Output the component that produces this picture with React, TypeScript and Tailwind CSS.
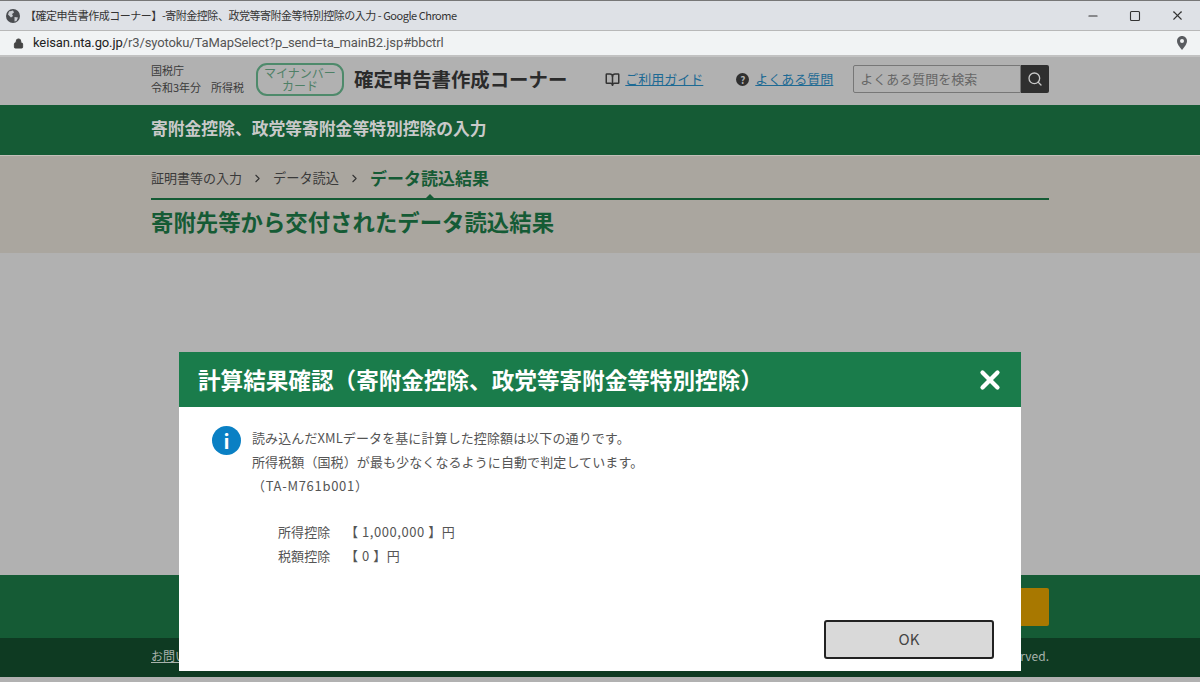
import { Search, X, Minus, Square, Lock, BookOpen, ChevronRight } from "lucide-react";

const font = "[font-family:'Noto_Sans_CJK_JP','Noto_Sans',sans-serif]";

export default function App() {
  return (
    <div className={`relative flex h-[682px] w-[1200px] flex-col overflow-hidden bg-[#b1b1b1] ${font}`}>
      {/* Browser title bar */}
      <div className="flex h-[30px] shrink-0 items-center border-t border-[#777] bg-[#dee1e6] pl-[6px]">
        <svg width="14" height="14" viewBox="0 0 14 14" className="shrink-0">
          <circle cx="7" cy="7" r="7" fill="#4a4c50" />
          <path d="M3 2.5 L7 1.5 L8 3.5 L6 5 L7 7 L5 8.5 L2 5.5 Z" fill="#c9ccd1" />
          <path d="M8.5 8 L12 8.5 L10.5 12 L8.5 12.5 Z" fill="#c9ccd1" />
        </svg>
        <span className="ml-[5px] whitespace-nowrap text-[11px] tracking-[-0.47px] text-[#333]">
          【確定申告書作成コーナー】-寄附金控除、政党等寄附金等特別控除の入力 - Google Chrome
        </span>
        <div className="ml-auto flex items-center gap-[29px] pr-[15px] text-[#333]">
          <Minus size={14} strokeWidth={1.9} />
          <Square size={12} strokeWidth={2.2} />
          <X size={15} strokeWidth={1.7} />
        </div>
      </div>
      {/* URL bar */}
      <div className="flex h-[25px] shrink-0 items-center border-t border-[#b8b8b8] bg-[#f1f3f4] pl-[13px] pr-[13px]">
        <Lock size={11} fill="#444" className="text-[#444]" />
        <span className="ml-[9px] whitespace-nowrap text-[13px] tracking-[-0.11px] text-[#555] [font-family:Roboto,sans-serif]">
          <span className="text-[#222]">keisan.nta.go.jp</span>/r3/syotoku/TaMapSelect?p_send=ta_mainB2.jsp#bbctrl
        </span>
        <svg width="10" height="14" viewBox="0 0 10 14" className="ml-auto shrink-0">
          <path d="M5 0 C2.2 0 0 2.2 0 5 C0 8.5 5 14 5 14 C5 14 10 8.5 10 5 C10 2.2 7.8 0 5 0 Z" fill="#5a5c60" />
          <circle cx="5" cy="5" r="2" fill="#f1f3f4" />
        </svg>
      </div>
      {/* Header */}
      <div className="flex h-[50px] shrink-0 items-center border-t-2 border-[#c2c2c2] bg-[#b1b1b1] pb-[4px] pl-[151px] pr-[151px]">
        <div className="w-[105px] shrink-0 text-[11px] leading-[17px] text-[#3a3a3a]">
          <div>国税庁</div>
          <div className="whitespace-nowrap">令和3年分&nbsp;&nbsp;&nbsp;&nbsp;所得税</div>
        </div>
        <div className="flex h-[33px] w-[88px] shrink-0 flex-col items-center justify-center rounded-[11px] border-2 border-[#4e8a6b] text-[12px] leading-[13px] text-[#4e8066]">
          <div>マイナンバー</div>
          <div>カード</div>
        </div>
        <div className="ml-[10px] whitespace-nowrap text-[19.4px] font-bold text-[#2b2b2b]">確定申告書作成コーナー</div>
        <BookOpen size={15} strokeWidth={2.4} className="ml-[38px] shrink-0 text-[#333]" />
        <a className="ml-[5px] whitespace-nowrap text-[13px] text-[#1d6a94] underline">ご利用ガイド</a>
        <span className="ml-[33px] flex h-[13px] w-[13px] shrink-0 items-center justify-center rounded-full bg-[#2f2f2f] text-[10px] font-bold text-[#b1b1b1]">?</span>
        <a className="ml-[6px] whitespace-nowrap text-[13px] text-[#1d6a94] underline">よくある質問</a>
        <div className="ml-[20px] flex h-[28px] w-[168px] shrink-0 items-center rounded-l-[2px] border border-[#777] pl-[6px] text-[13px] text-[#666]">よくある質問を検索</div>
        <div className="flex h-[28px] w-[28px] shrink-0 items-center justify-center rounded-r-[2px] bg-[#2f2f2f]">
          <Search size={16} className="text-[#c8c8c8]" strokeWidth={2} />
        </div>
      </div>
      {/* Green title band */}
      <div className="flex h-[50px] shrink-0 items-center bg-[#155b35] pb-[2px] pl-[151px] text-[16.8px] font-bold text-[#c9c9c9]">
        寄附金控除、政党等寄附金等特別控除の入力
      </div>
      {/* Breadcrumb */}
      <div className="h-[98px] shrink-0 border-t border-[#c3c0ba] bg-[#aaa69f] px-[151px]">
        <div className="relative flex h-[44px] items-center border-b-2 border-[#155b35] pt-[2px]">
          <span className="text-[13px] text-[#3a3a3a]">証明書等の入力</span>
          <ChevronRight size={13} strokeWidth={2} className="mx-[9px] text-[#333]" />
          <span className="text-[13.2px] text-[#3a3a3a]">データ読込</span>
          <ChevronRight size={13} strokeWidth={2} className="mx-[9px] text-[#333]" />
          <span className="text-[17px] font-bold text-[#155b35]">データ読込結果</span>
          <span className="absolute bottom-0 left-[275px] h-0 w-0 border-x-[4px] border-b-[4px] border-x-transparent border-b-[#155b35]"></span>
        </div>
        <div className="mt-[5px] whitespace-nowrap text-[22.4px] font-bold leading-[32px] text-[#155b35]">寄附先等から交付されたデータ読込結果</div>
      </div>
      {/* Empty body */}
      <div className="flex-1 bg-[#b1b1b1]"></div>
      {/* Footer action band */}
      <div className="flex h-[63px] shrink-0 items-center justify-end bg-[#155b35] pr-[151px]">
        <div className="h-[38px] w-[120px] rounded-[2px] bg-[#a87800]"></div>
      </div>
      <div className="flex h-[39px] shrink-0 items-center justify-between bg-[#0e3a22] px-[151px] pb-[3px] text-[12px] text-[#a9b3ad]">
        <span className="underline">お問い合わせ</span>
        <span className="whitespace-nowrap">All Rights Reserved.</span>
      </div>
      <div className="h-[5px] shrink-0 bg-[#b1b1b1]"></div>

      {/* Modal */}
      <div className="absolute left-[179px] top-[352px] flex h-[319px] w-[842px] flex-col bg-white">
        <div className="flex h-[55px] shrink-0 items-center justify-between bg-[#1a7c4b] pl-[19px] pr-[16px]">
          <span className="whitespace-nowrap text-[22.6px] font-bold text-white">計算結果確認（寄附金控除、政党等寄附金等特別控除）</span>
          <X size={30} strokeWidth={3.4} className="text-white" />
        </div>
        <div className="flex flex-1 flex-col px-[33px] pt-[19px]">
          <div className="flex">
            <span className="flex h-[29px] w-[29px] shrink-0 items-center justify-center rounded-full bg-[#0a80c4] text-[20px] font-bold text-white">i</span>
            <div className="ml-[11px] text-[13px] leading-[24px] tracking-[0.1px] text-[#555]">
              <div>読み込んだXMLデータを基に計算した控除額は以下の通りです。</div>
              <div>所得税額（国税）が最も少なくなるように自動で判定しています。</div>
              <div className="tracking-[0.7px]">（TA-M761b001）</div>
              <div className="mt-[22px] flex pl-[26px]">
                <span className="w-[67px]">所得控除</span>
                <span className="whitespace-pre tracking-[0.55px]">【 1,000,000 】円</span>
              </div>
              <div className="flex pl-[26px]">
                <span className="w-[67px]">税額控除</span>
                <span className="whitespace-pre tracking-[0.55px]">【 0 】円</span>
              </div>
            </div>
          </div>
        </div>
        <div className="flex justify-end pb-[12px] pr-[27px]">
          <button className="flex h-[39px] w-[170px] items-center justify-center rounded-[3px] border-2 border-[#222] bg-[#d9d9d9] text-[15px] text-[#444]">OK</button>
        </div>
      </div>
    </div>
  );
}
